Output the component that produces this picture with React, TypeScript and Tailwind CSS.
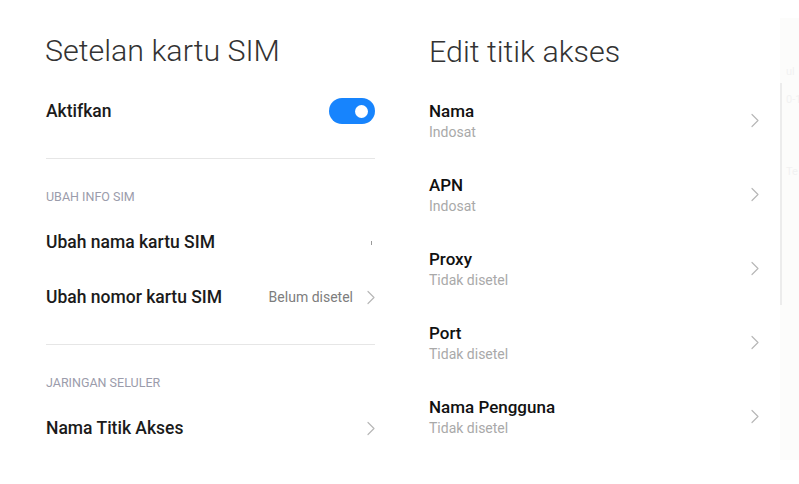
const font = { fontFamily: 'Roboto, "Noto Sans", "Liberation Sans", sans-serif' }

function Chevron() {
  return (
    <svg width="8" height="15" viewBox="0 0 8 15" fill="none" className="shrink-0">
      <path d="M1 1.5 L7 7.5 L1 13.5" stroke="#b8b8b8" strokeWidth="1.2" strokeLinecap="round" strokeLinejoin="round" />
    </svg>
  )
}

function Toggle() {
  return (
    <div className="w-[46px] h-[26px] rounded-full bg-[#1784fd] flex items-center justify-end pr-[7px]">
      <div className="w-[13px] h-[13px] rounded-full bg-white" />
    </div>
  )
}

function SectionLabel({ children }: { children: string }) {
  return (
    <div className="h-[56px] flex items-end pb-[10px]">
      <span className="text-[12.5px] leading-[16px] text-[#9b9cab]">{children}</span>
    </div>
  )
}

function Row({ label, value, chevron, tick }: { label: string; value?: string; chevron?: boolean; tick?: boolean }) {
  return (
    <div className="h-[55px] flex items-center justify-between">
      <span className="text-[17.5px] font-medium text-[#1b1b1b]">{label}</span>
      <div className="flex items-center gap-[14px]">
        {value && <span className="text-[14px] text-[#7d7d7d]">{value}</span>}
        {chevron && <Chevron />}
        {tick && <div className="w-[1px] h-[4px] bg-[#9a9a9a] mr-[3px]" />}
      </div>
    </div>
  )
}

function ApnItem({ title, sub }: { title: string; sub: string }) {
  return (
    <div className="h-[74px] flex items-center justify-between">
      <div className="flex flex-col">
        <span className="text-[17px] leading-[22px] font-medium text-[#111]">{title}</span>
        <span className="text-[14px] leading-[20px] text-[#a9a9a9]">{sub}</span>
      </div>
      <div className="-mt-[2px]">
        <Chevron />
      </div>
    </div>
  )
}

export default function App() {
  const apn = [
    { title: 'Nama', sub: 'Indosat' },
    { title: 'APN', sub: 'Indosat' },
    { title: 'Proxy', sub: 'Tidak disetel' },
    { title: 'Port', sub: 'Tidak disetel' },
    { title: 'Nama Pengguna', sub: 'Tidak disetel' },
  ]

  return (
    <div className="w-[799px] h-[484px] bg-white flex pl-[46px] overflow-hidden" style={font}>
      {/* Setelan kartu SIM */}
      <div className="w-[329px] shrink-0 flex flex-col">
        <div className="pt-[33px] text-[30.4px] leading-[36px] font-light text-[#333] -ml-[1px]">Setelan kartu SIM</div>
        <div className="mt-[14px] h-[56px] flex items-center justify-between">
          <span className="text-[17.5px] font-medium text-[#1b1b1b]">Aktifkan</span>
          <Toggle />
        </div>
        <div className="mt-[19px] border-t border-[#e6e6e6]" />
        <SectionLabel>UBAH INFO SIM</SectionLabel>
        <Row label="Ubah nama kartu SIM" tick />
        <Row label="Ubah nomor kartu SIM" value="Belum disetel" chevron />
        <div className="mt-[19px] border-t border-[#e6e6e6]" />
        <SectionLabel>JARINGAN SELULER</SectionLabel>
        <Row label="Nama Titik Akses" chevron />
      </div>

      {/* Edit titik akses */}
      <div className="ml-[54px] w-[351px] shrink-0 flex flex-col pr-[21px]">
        <div className="pt-[34px] text-[30.4px] leading-[36px] font-light text-[#333]">Edit titik akses</div>
        <div className="mt-[14px] flex flex-col">
          {apn.map((a) => (
            <ApnItem key={a.title} title={a.title} sub={a.sub} />
          ))}
        </div>
      </div>

      {/* faded screen behind */}
      <div className="flex-1 mt-[18px] mb-[24px] bg-[#fcfcfb] flex">
        <div className="mt-[65px] w-[2px] h-[222px] bg-[#ececec]" />
        <div className="flex flex-col pl-[4px] text-[11px] leading-[14px] text-[#f2f2f2] whitespace-nowrap">
          <span className="mt-[47px]">ul</span>
          <span className="mt-[14px]">0-1</span>
          <span className="mt-[58px]">Te</span>
        </div>
      </div>
    </div>
  )
}
